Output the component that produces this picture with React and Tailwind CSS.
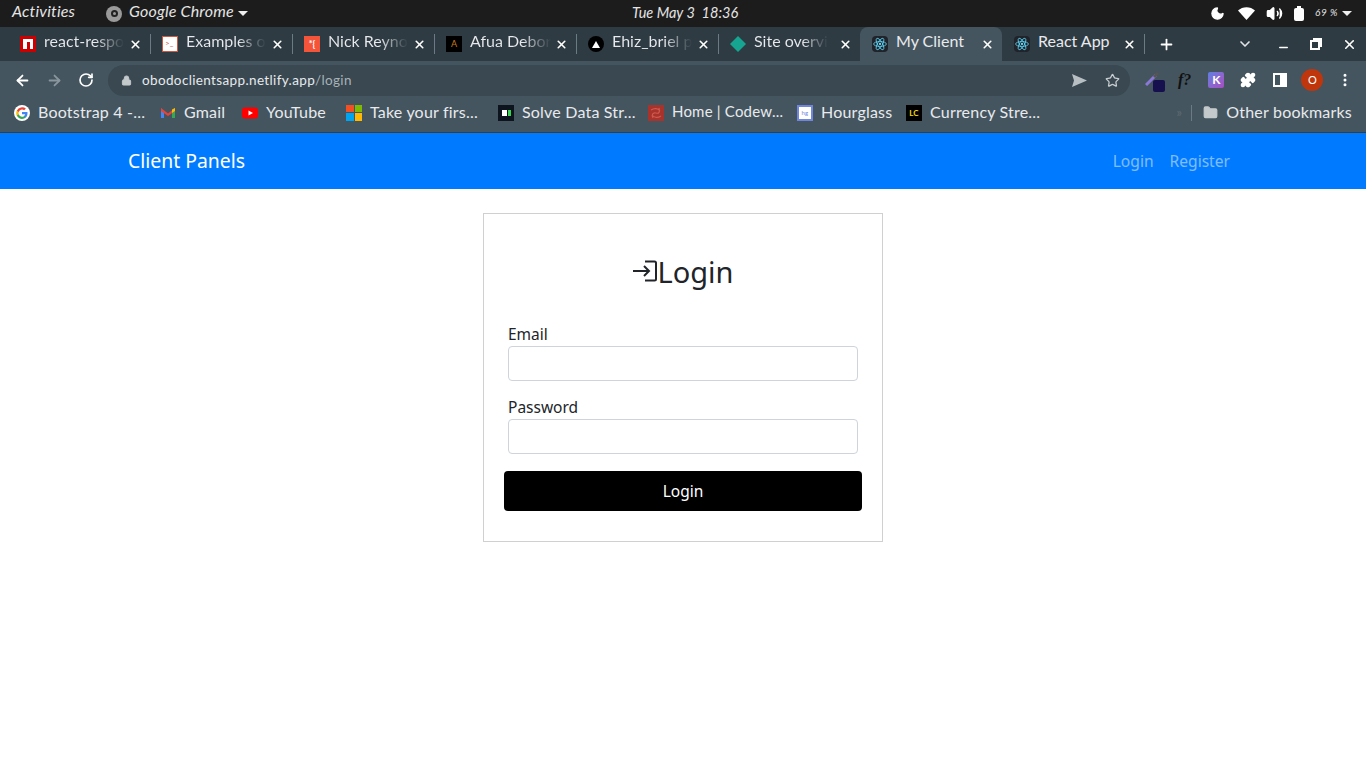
import { ArrowLeft, ArrowRight, RotateCw, Lock, Star, X, Plus, ChevronDown, Puzzle, MoreVertical, Folder, Moon, Volume2, Minus } from "lucide-react";

const chrome = { fontFamily: "Lato, 'Open Sans', sans-serif" };

function Favicon({ kind }) {
  if (kind === "npm") {
    return (
      <div className="w-4 h-4 bg-[#c00] flex items-center justify-center shrink-0">
        <div className="w-[10px] h-[10px] bg-white flex justify-center items-end"><div className="w-[3px] h-[7px] bg-[#c00]" /></div>
      </div>
    );
  }
  if (kind === "term") {
    return (
      <div className="w-4 h-4 bg-white border border-[#d0573f] text-[#d0573f] text-[8px] leading-[13px] pl-[2px] shrink-0">{">_"}</div>
    );
  }
  if (kind === "star") {
    return <div className="w-4 h-4 bg-[#f4543a] text-white text-[9px] leading-4 text-center font-bold shrink-0">*{"{"}</div>;
  }
  if (kind === "a") {
    return <div className="w-4 h-4 bg-black text-[#c77a1e] text-[9px] leading-4 text-center shrink-0">A</div>;
  }
  if (kind === "tri") {
    return (
      <div className="w-4 h-4 rounded-full bg-black flex items-center justify-center shrink-0">
        <svg width="8" height="7" viewBox="0 0 8 7"><path d="M4 0 8 7H0z" fill="#fff" /></svg>
      </div>
    );
  }
  if (kind === "diamond") {
    return (
      <svg width="16" height="16" viewBox="0 0 16 16" className="shrink-0"><path d="M8 0 16 8 8 16 0 8z" fill="#15a591" /></svg>
    );
  }
  return (
    <div className="w-4 h-4 bg-[#20232a] rounded-sm flex items-center justify-center shrink-0">
      <svg width="14" height="14" viewBox="-12 -12 24 24" fill="none" stroke="#61dafb" strokeWidth="1.3">
        <ellipse rx="11" ry="4.2" />
        <ellipse rx="11" ry="4.2" transform="rotate(60)" />
        <ellipse rx="11" ry="4.2" transform="rotate(120)" />
        <circle r="2" fill="#61dafb" stroke="none" />
      </svg>
    </div>
  );
}

// titles stop where the reference's tab fade ends them
const tabs = [
  { icon: "npm", title: "react-respo", fade: true },
  { icon: "term", title: "Examples o", fade: true },
  { icon: "star", title: "Nick Reyno", fade: true },
  { icon: "a", title: "Afua Debor", fade: true },
  { icon: "tri", title: "Ehiz_briel p", fade: true },
  { icon: "diamond", title: "Site overvi", fade: true },
  { icon: "react", title: "My Client", active: true },
  { icon: "react", title: "React App" },
];

function Tab({ tab }) {
  return (
    <div className={`w-[142px] h-[34px] flex items-center pl-3 pr-2 gap-2 relative ${tab.active ? "bg-[#44555f] rounded-t-lg" : ""}`}>
      <Favicon kind={tab.icon} />
      <div className="flex-1 min-w-0 whitespace-nowrap text-[16px] leading-none pb-[6px]">
        <span className={tab.fade ? "bg-gradient-to-r from-[#e8eaed] from-[65%] to-[#2f3b43] bg-clip-text text-transparent" : "text-[#e8eaed]"}>
          {tab.title}
        </span>
      </div>
      <X size={13} strokeWidth={3} className="text-white shrink-0" />
      {!tab.active && <div className="absolute right-[-1px] top-[7px] w-px h-[20px] bg-[#6b7a83]" />}
    </div>
  );
}

const bookmarks = [
  { label: "Bootstrap 4 -...", icon: <GoogleIcon />, w: "w-[146px]" },
  { label: "Gmail", icon: <GmailIcon />, w: "w-[82px]" },
  { label: "YouTube", icon: <YoutubeIcon />, w: "w-[104px]" },
  { label: "Take your firs...", icon: <MsIcon />, w: "w-[152px]" },
  { label: "Solve Data Str...", icon: <div className="w-4 h-4 bg-[#0e141e] flex items-center justify-center gap-px"><div className="w-[5px] h-[6px] bg-white" /><div className="w-[3px] h-[6px] bg-[#39d353]" /></div>, w: "w-[150px]" },
  { label: "Home | Codew...", icon: <CodewarsIcon />, w: "w-[149px]", text: "text-[15px]" },
  { label: "Hourglass", icon: <div className="w-4 h-4 bg-[#6f86dc] p-[2px]"><div className="w-full h-full bg-white text-[#6f86dc] text-[6px] leading-[12px] text-center">hg</div></div>, w: "w-[109px]" },
  { label: "Currency Stre...", icon: <div className="w-4 h-4 bg-black text-[#f5d800] text-[8px] leading-4 text-center font-bold">LC</div>, w: "w-[150px]" },
];

function CodewarsIcon() {
  return (
    <svg width="16" height="16" viewBox="0 0 16 16">
      <rect width="16" height="16" fill="#a8322c" />
      <g fill="none" stroke="#cf5a50" strokeWidth="1.2">
        <path d="M3 5c3-2 7-2 9 1M13 11c-3 2-7 2-9-1M5 13C3 10 5 7 8 8s4-1 3-5" />
      </g>
    </svg>
  );
}

function GoogleIcon() {
  return (
    <div className="w-4 h-4 rounded-full bg-white flex items-center justify-center">
      <svg width="12" height="12" viewBox="0 0 24 24">
        <path d="M23 12.3c0-.8-.1-1.600-.2-2.300H12v4.400h6.200a5.300 5.300 0 0 1-2.300 3.500v2.900h3.700c2.200-2 3.400-5 3.400-8.500z" fill="#4285f4" />
        <path d="M12 24c3.100 0 5.700-1 7.600-2.800l-3.700-2.900c-1 .7-2.300 1.100-3.900 1.100-3 0-5.500-2-6.400-4.700H1.800v3A12 12 0 0 0 12 24z" fill="#34a853" />
        <path d="M5.600 14.700a7.200 7.200 0 0 1 0-4.600v-3H1.800a12 12 0 0 0 0 10.600z" fill="#fbbc05" />
        <path d="M12 4.800c1.700 0 3.200.6 4.400 1.700l3.300-3.300A12 12 0 0 0 1.800 7.100l3.800 3C6.500 6.800 9 4.800 12 4.800z" fill="#ea4335" />
      </svg>
    </div>
  );
}

function GmailIcon() {
  return (
    <svg width="16" height="16" viewBox="0 0 16 16">
      <path d="M1 3v10h3V7z" fill="#4285f4" />
      <path d="M15 3v10h-3V7z" fill="#34a853" />
      <path d="M1 3l7 5.500L15 3v3L8 11 1 6z" fill="#ea4335" />
      <path d="M12 4.500 15 3v3l-3 2z" fill="#fbbc05" />
    </svg>
  );
}

function YoutubeIcon() {
  return (
    <svg width="16" height="16" viewBox="0 0 16 16">
      <rect y="2.500" width="16" height="11" rx="3" fill="#f00" />
      <path d="M6.500 5.500 11 8l-4.500 2.500z" fill="#fff" />
    </svg>
  );
}

function MsIcon() {
  return (
    <div className="w-4 h-4 grid grid-cols-2 gap-px">
      <div className="bg-[#f25022]" />
      <div className="bg-[#7fba00]" />
      <div className="bg-[#00a4ef]" />
      <div className="bg-[#ffb900]" />
    </div>
  );
}

function TopBar() {
  return (
    <div className="h-[27px] bg-[#1c1c1c] flex items-center text-[#e4e4e4] text-[16px] italic tracking-[0.2px] relative pl-3 pr-[14px]" style={chrome}>
      <span className="w-[94px] mb-[5px]">Activities</span>
      <div className="w-4 h-4 rounded-full bg-[#9a9a9a] flex items-center justify-center mr-[7px]">
        <div className="w-[7px] h-[7px] rounded-full border-2 border-[#222]" />
      </div>
      <span className="mb-[5px]">Google Chrome</span>
      <svg width="10" height="5" viewBox="0 0 10 5" className="ml-[4px]"><path d="M0 0h10L5 5z" fill="#eee" /></svg>
      <span className="absolute left-[632px] top-[2px] text-[14.5px] tracking-normal">Tue May 3&nbsp; 18:36</span>
      <div className="ml-auto flex items-center not-italic">
        <Moon size={15} fill="#fff" className="text-white mr-[13px]" />
        <svg width="17" height="13" viewBox="0 0 17 13" className="mr-[11px]"><path d="M0 3.500C4.500-1 12.500-1 17 3.500L8.500 13z" fill="#fff" /></svg>
        <Volume2 size={17} fill="#fff" className="text-white mr-[11px]" />
        <div className="w-[10px] h-[13px] bg-white rounded-[2px] mr-[11px] mt-[2px] relative">
          <div className="absolute left-[3px] top-[-2px] w-[4px] h-[2px] bg-white" />
        </div>
        <span className="text-[10px] italic tracking-[0.5px] mr-[4px] mb-[3px]">69 %</span>
        <svg width="10" height="5" viewBox="0 0 10 5"><path d="M0 0h10L5 5z" fill="#eee" /></svg>
      </div>
    </div>
  );
}

function TabStrip() {
  return (
    <div className="h-[34px] bg-[#2f3b43] flex items-center pl-2" style={chrome}>
      {tabs.map((t) => (
        <Tab key={t.title} tab={t} />
      ))}
      <Plus size={17} strokeWidth={2.5} className="text-white ml-[14px]" />
      <ChevronDown size={16} strokeWidth={2.5} className="text-[#dfe3e6] ml-[62px]" />
      <Minus size={13} strokeWidth={2.5} className="text-white ml-[24px] mt-[6px]" />
      <svg width="12" height="12" viewBox="0 0 12 12" fill="none" stroke="#fff" strokeWidth="2" className="ml-[20px]">
        <path d="M4 3V1h7v7H9" />
        <rect x="1" y="3" width="8" height="8" />
      </svg>
      <X size={15} strokeWidth={2.5} className="text-white ml-[20px]" />
    </div>
  );
}

function Toolbar() {
  return (
    <div className="h-[36px] bg-[#44555f] flex items-center pl-[14px] pt-[2px]" style={chrome}>
      <ArrowLeft size={17} strokeWidth={2.5} className="text-white" />
      <ArrowRight size={17} strokeWidth={2.5} className="text-[#8a969d] ml-[15px]" />
      <RotateCw size={16} strokeWidth={2.5} className="text-white ml-[15px]" />
      <div className="ml-[14px] w-[1022px] h-[31px] rounded-full bg-[#394851] flex items-center pl-[13px] pr-[10px]">
        <Lock size={11} fill="#c4c9cc" className="text-[#c4c9cc]" />
        <span className="ml-[10px] text-[13.5px] tracking-[0.36px] text-[#e8eaed]">
          obodoclientsapp.netlify.app<span className="text-[#a9b2b7]">/login</span>
        </span>
        <svg width="15" height="13" viewBox="0 0 15 13" className="ml-auto mr-[18px]"><path d="M0 0 15 6.500 0 13l2-6.500z" fill="#b8bfc3" /></svg>
        <Star size={15} strokeWidth={2} className="text-[#c8cdd0]" />
      </div>
      <div className="w-4 h-4 ml-[15px] relative">
        <svg width="14" height="14" viewBox="0 0 14 14"><path d="M1 13 11 3" stroke="#8a78d8" strokeWidth="3" /><path d="M9 5 13 1" stroke="#555" strokeWidth="3" /></svg>
        <div className="absolute left-[8px] top-[8px] w-3 h-3 bg-[#16104f] rounded-[2px]" />
      </div>
      <span className="ml-[17px] text-[16px] italic font-bold text-[#111]" style={{ fontFamily: "'Liberation Serif', serif" }}>f?</span>
      <div className="ml-[17px] w-4 h-4 rounded-[2px] bg-gradient-to-br from-[#5c7ee0] to-[#a64bc0] text-white text-[12px] font-bold leading-4 text-center">K</div>
      <Puzzle size={16} fill="#fff" className="text-white ml-[16px]" />
      <div className="ml-[17px] w-[14px] h-[14px] border-2 border-white flex justify-end"><div className="w-[5px] h-full bg-white" /></div>
      <div className="ml-[14px] w-[22px] h-[22px] rounded-full bg-[#bf360c] text-white text-[11px] leading-[22px] text-center">O</div>
      <MoreVertical size={16} strokeWidth={2.5} className="text-white ml-[14px]" />
    </div>
  );
}

function BookmarkBar() {
  return (
    <div className="h-[36px] bg-[#44555f] border-b border-[#333f47] flex items-center pl-[14px] pb-[4px] text-[16px] text-[#e8eaed] tracking-[0.2px]" style={chrome}>
      {bookmarks.map((b) => (
        <div key={b.label} className={`${b.w} flex items-center gap-2 shrink-0`}>
          <div className="w-4 h-4 shrink-0">{b.icon}</div>
          <span className={`whitespace-nowrap mb-[2px] ${b.text || ""}`}>{b.label}</span>
        </div>
      ))}
      <div className="ml-auto flex items-center pr-[14px]">
        <span className="text-[#5c6a72] text-[13px] mr-[9px]">»</span>
        <div className="w-px h-[16px] bg-[#6b7a83] mr-[11px]" />
        <Folder size={15} fill="#c4c9cc" className="text-[#c4c9cc] mr-[8px]" />
        <span className="mb-[2px]">Other bookmarks</span>
      </div>
    </div>
  );
}

export default function App() {
  return (
    <div className="min-h-screen bg-white">
      <TopBar />
      <TabStrip />
      <Toolbar />
      <BookmarkBar />
      <div style={{ fontFamily: "'Noto Sans', 'Open Sans', sans-serif" }}>
        <nav className="h-[56px] bg-[#007bff] flex items-center justify-between pl-[128px] pr-[136px]">
          <span className="text-white text-[19.4px]">Client Panels</span>
          <div className="flex gap-4 text-[15.6px] text-white/50 pt-[2px]">
            <span>Login</span>
            <span>Register</span>
          </div>
        </nav>
        <div className="flex justify-center pt-6">
          <div className="w-[400px] h-[329px] border border-[#d0d0d0] px-5 pt-[39px]">
            <h1 className="flex items-center justify-center text-[#212529] text-[29px] leading-[40px] h-[40px] pb-[2px]">
              <svg width="24" height="22" viewBox="0 0 24 22" fill="none" stroke="#212529" strokeWidth="2" className="mb-[2px] mr-[1px]">
                <path d="M12 1.500h9.500a1.500 1.500 0 0 1 1.500 1.500v16a1.500 1.500 0 0 1-1.500 1.500H12" />
                <path d="M0 11h16M11 6l5 5-5 5" />
              </svg>
              <span>Login</span>
            </h1>
            <div className="px-1 mt-[29px]">
              <label className="block text-[15.5px] leading-6 text-[#212529]">Email</label>
              <input className="block w-full h-[35px] bg-white border border-[#ced4da] rounded-[4px]" />
              <label className="block text-[15.5px] leading-6 text-[#212529] mt-[14px]">Password</label>
              <input type="password" className="block w-full h-[35px] bg-white border border-[#ced4da] rounded-[4px]" />
            </div>
            <button className="block w-full h-[40px] mt-[17px] pt-[2px] bg-black text-white text-[15.5px] rounded-[4px]">Login</button>
          </div>
        </div>
      </div>
    </div>
  );
}
